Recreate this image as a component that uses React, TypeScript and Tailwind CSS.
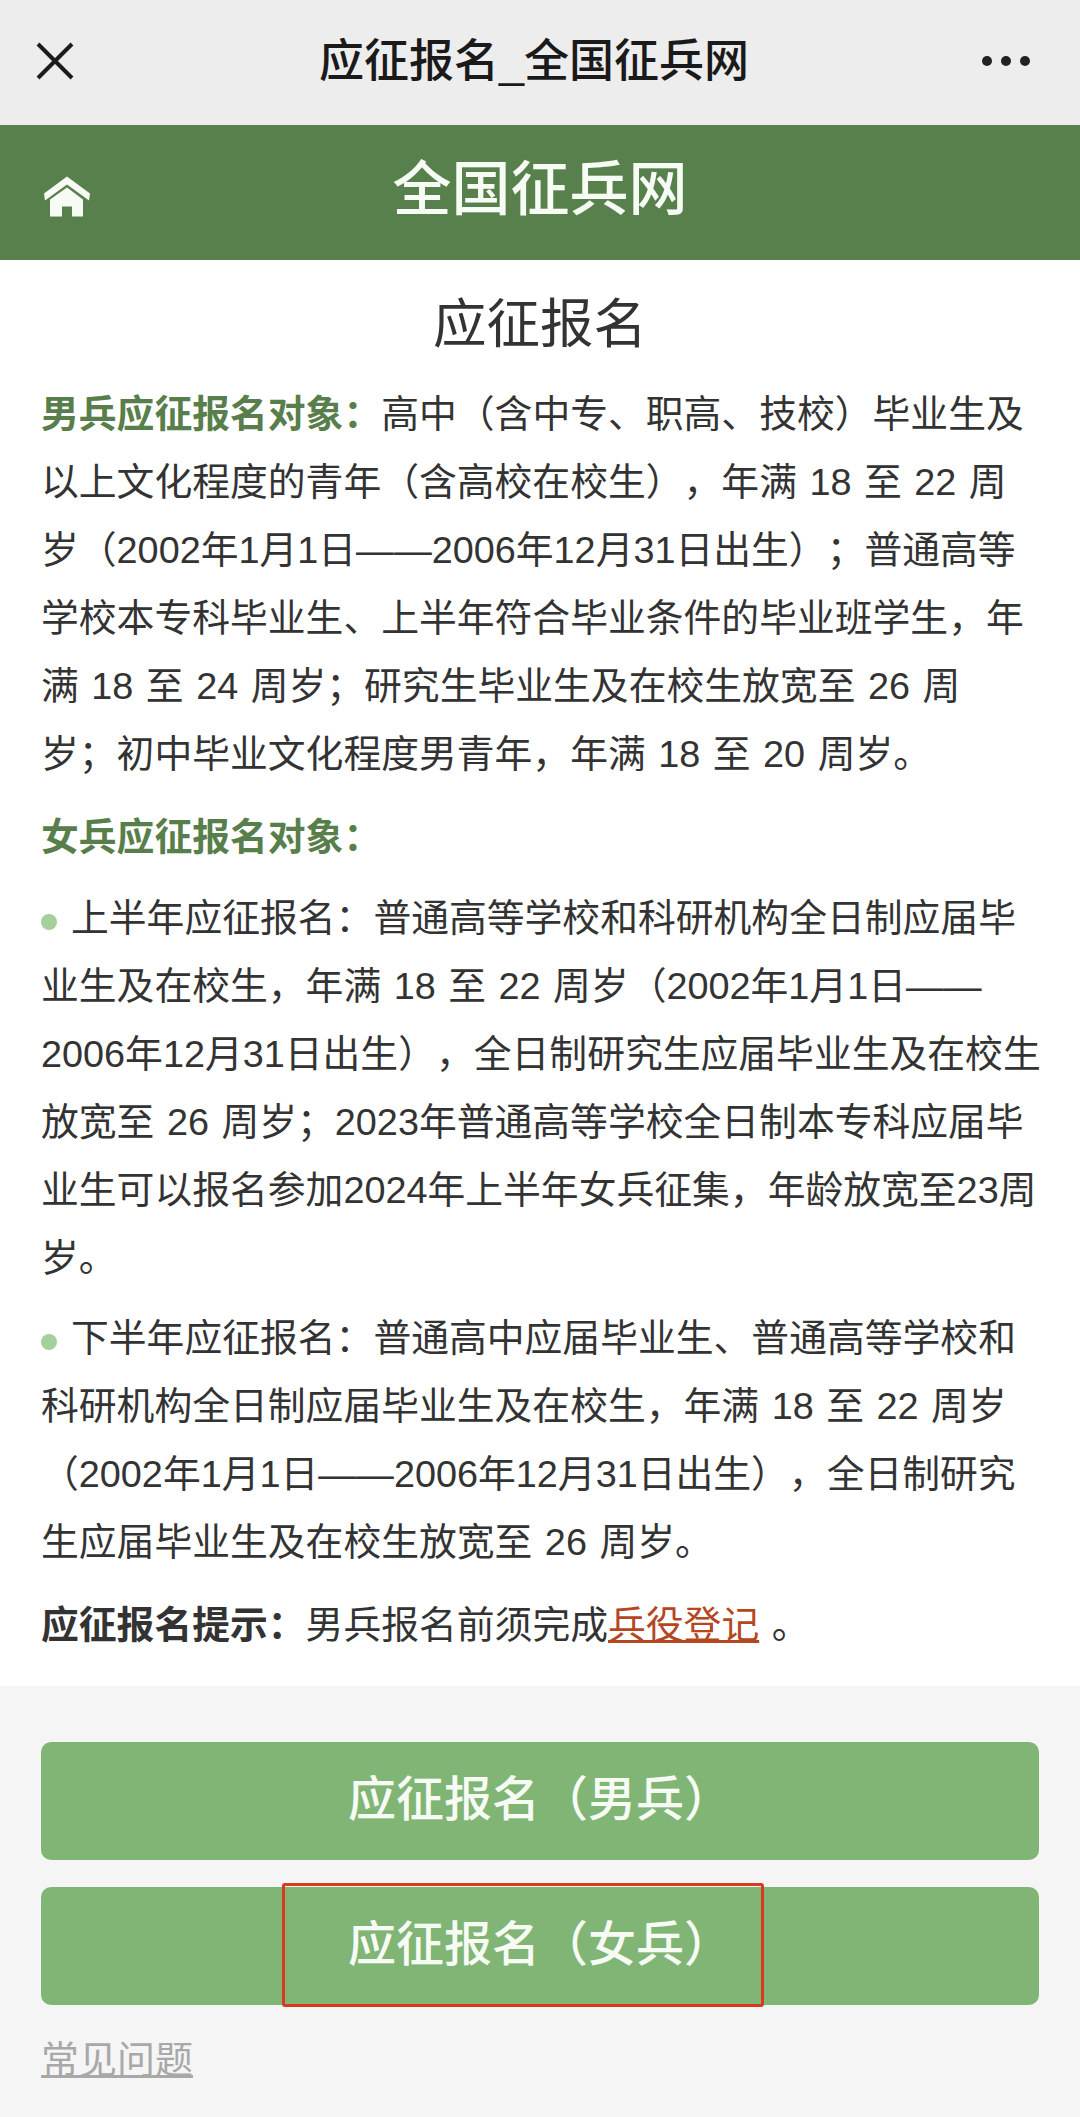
const FONT = "[font-family:'Liberation_Sans','Noto_Sans_CJK_SC',sans-serif] [text-spacing-trim:space-all]";

const MALE_LINES = [
  "以上文化程度的青年（含高校在校生），年满 18 至 22 周",
  "岁（2002年1月1日——2006年12月31日出生）；普通高等",
  "学校本专科毕业生、上半年符合毕业条件的毕业班学生，年",
  "满 18 至 24 周岁；研究生毕业生及在校生放宽至 26 周",
  "岁；初中毕业文化程度男青年，年满 18 至 20 周岁。",
];

const FIRST_HALF = [
  "业生及在校生，年满 18 至 22 周岁（2002年1月1日——",
  "2006年12月31日出生），全日制研究生应届毕业生及在校生",
  "放宽至 26 周岁；2023年普通高等学校全日制本专科应届毕",
  "业生可以报名参加2024年上半年女兵征集，年龄放宽至23周",
  "岁。",
];

const SECOND_HALF = [
  "科研机构全日制应届毕业生及在校生，年满 18 至 22 周岁",
  "（2002年1月1日——2006年12月31日出生），全日制研究",
  "生应届毕业生及在校生放宽至 26 周岁。",
];

function Bullet() {
  return <span className="inline-block w-[16px] h-[16px] rounded-full bg-[#a5cf9b] mr-[14px] align-[1px]" />;
}

function Lines({ lines }: { lines: string[] }) {
  return (
    <>
      {lines.map((line) => (
        <span key={line} className="block">
          {line}
        </span>
      ))}
    </>
  );
}

function ApplyButton({ label }: { label: string }) {
  return (
    <button className="w-full h-[118px] rounded-[10px] bg-[#80b576] text-[#f6fbf3] text-[48px] font-medium flex items-center justify-center pb-[3px]">
      {label}
    </button>
  );
}

export default function App() {
  return (
    <div className={`w-[1080px] h-[2117px] overflow-hidden flex flex-col bg-[#f5f5f5] ${FONT}`}>
      {/* WeChat nav bar */}
      <div className="h-[125px] bg-[#ededed] flex items-center justify-between pl-[36px] pr-[50px] relative">
        <svg width="38" height="38" viewBox="0 0 38 38" fill="none" stroke="#1c1c1c" strokeWidth="4" className="mb-[3px]">
          <path d="M2 2 L36 36 M36 2 L2 36" />
        </svg>
        <div className="ml-[12px] text-[45px] font-medium text-[#1a1a1a] leading-none pb-[3px]">应征报名_全国征兵网</div>
        <div className="flex gap-[9px] mb-[3px]">
          <span className="w-[10px] h-[10px] rounded-full bg-[#222222]" />
          <span className="w-[10px] h-[10px] rounded-full bg-[#222222]" />
          <span className="w-[10px] h-[10px] rounded-full bg-[#222222]" />
        </div>
      </div>

      {/* Site header */}
      <div className="h-[135px] bg-[#58804c] flex items-center relative">
        <svg width="47" height="42" viewBox="0 0 47 41" fill="#f7fbf4" className="absolute left-[44px] top-[51px]">
          <path d="M23 0 L46 17 L45 24 L23 8 L1 24 L0 17 Z" />
          <path d="M23 11 L39 23 L39 40 L28 40 L28 30 L18 30 L18 40 L6 40 L6 23 Z" />
        </svg>
        <div className="w-full text-center text-[59px] font-medium text-[#f6fbf3] leading-none pb-[4px]">全国征兵网</div>
      </div>

      {/* Article */}
      <div className="h-[1426px] bg-white px-[41px] text-[37.8px] leading-[68px] text-[#333333] whitespace-nowrap [word-spacing:2px]">
        <h1 className="text-center text-[53.5px] font-normal leading-[68px] text-[#333333] pt-[31px] mb-[21px]">应征报名</h1>
        <p className="mb-[15px]">
          <span className="block">
            <strong className="font-bold text-[#587f4b]">男兵应征报名对象：</strong>
            高中（含中专、职高、技校）毕业生及
          </span>
          <Lines lines={MALE_LINES} />
        </p>
        <p className="mb-[13px] font-bold text-[#587f4b]">女兵应征报名对象：</p>
        <p className="mb-[12px]">
          <span className="block">
            <Bullet />
            上半年应征报名：普通高等学校和科研机构全日制应届毕
          </span>
          <Lines lines={FIRST_HALF} />
        </p>
        <p className="mb-[15px]">
          <span className="block">
            <Bullet />
            下半年应征报名：普通高中应届毕业生、普通高等学校和
          </span>
          <Lines lines={SECOND_HALF} />
        </p>
        <p>
          <strong className="font-bold">应征报名提示：</strong>
          男兵报名前须完成<a className="text-[#b4471f] underline">兵役登记</a> 。
        </p>
      </div>

      {/* Footer actions */}
      <div className="flex-1 px-[41px] pt-[56px] relative">
        <div className="flex flex-col gap-[27px]">
          <ApplyButton label="应征报名（男兵）" />
          <ApplyButton label="应征报名（女兵）" />
        </div>
        <a className="block mt-[30px] text-[38px] leading-[50px] text-[#a8a8a8] underline">常见问题</a>
        {/* red annotation box */}
        <div className="absolute left-[282px] top-[197px] w-[482px] h-[124px] border-[3px] border-[#d9391f] rounded-[3px]" />
      </div>
    </div>
  );
}
